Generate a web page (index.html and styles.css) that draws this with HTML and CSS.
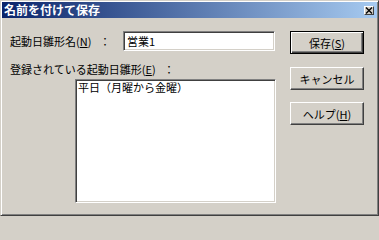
FILE: index.html
```html
<!DOCTYPE html>
<html lang="ja">
<head>
<meta charset="utf-8">
<title>名前を付けて保存</title>
<link rel="stylesheet" href="styles.css">
</head>
<body>
<div class="window">
  <div class="titlebar">
    <span class="title">名前を付けて保存</span>
    <span class="close">
      <svg width="8" height="7" viewBox="0 0 8 7"><path d="M1 0.5 L7 6.5 M7 0.5 L1 6.5" stroke="#000" stroke-width="1.3" fill="none"/></svg>
    </span>
  </div>
  <div class="body">
    <div class="left">
      <div class="row">
        <span class="label">起動日雛形名(<u>N</u>)<span class="colon">：</span></span>
        <div class="field">営業1</div>
      </div>
      <div class="label2">登録されている起動日雛形(<u>E</u>)<span class="colon">：</span></div>
      <div class="list">
        <div class="item">平日（月曜から金曜）</div>
      </div>
    </div>
    <div class="buttons">
      <div class="btn default"><span class="btn-in">保存(<u>S</u>)</span></div>
      <div class="btn cancel"><span class="btn-in">キャンセル</span></div>
      <div class="btn help"><span class="btn-in">ヘルプ(<u>H</u>)</span></div>
    </div>
  </div>
</div>
</body>
</html>
```
FILE: styles.css
```css
html, body {
  margin: 0;
  padding: 0;
  background: #d4d0c8;
}
body {
  font-family: "Noto Sans CJK JP", "Noto Sans", sans-serif;
  font-size: 11px;
  color: #000;
}
.window {
  box-sizing: border-box;
  width: 379px;
  height: 216px;
  background: #d4d0c8;
  border: 1px solid;
  border-color: #d4d0c8 #404040 #404040 #d4d0c8;
  box-shadow: inset 1px 1px #fff, inset -1px -1px #808080;
  padding: 1px;
  display: flex;
  flex-direction: column;
}
.titlebar {
  height: 16px;
  background: linear-gradient(to right, #0a246a, #a6caf0);
  display: flex;
  align-items: center;
  justify-content: space-between;
  padding: 0 3px 0 2px;
}
.title {
  color: #fff;
  font-weight: bold;
  font-size: 12px;
  line-height: 16px;
}
.close {
  box-sizing: border-box;
  width: 10px;
  height: 9px;
  background: #d4d0c8;
  border: 1px solid;
  border-color: #fff #404040 #404040 #fff;
  display: flex;
  align-items: center;
  justify-content: center;
}
.close svg { display: block; }
.body {
  display: flex;
  gap: 14px;
  padding: 13px 13px 0 8px;
}
.left {
  width: 266px;
  display: flex;
  flex-direction: column;
}
.row {
  display: flex;
  align-items: center;
  height: 20px;
}
.label {
  width: 113px;
  line-height: 16px;
  white-space: nowrap;
}
.colon {
  margin-left: 8px;
}
.field {
  box-sizing: border-box;
  width: 152px;
  height: 20px;
  background: #fff;
  border: 1px solid;
  border-color: #808080 #fff #fff #808080;
  box-shadow: inset 1px 1px #404040, inset -1px -1px #d4d0c8;
  padding: 0 3px;
  line-height: 18px;
  white-space: nowrap;
}
.label2 {
  margin-top: 10px;
  margin-bottom: 2px;
  line-height: 16px;
  white-space: nowrap;
}
.list {
  box-sizing: border-box;
  margin-left: 65px;
  width: 201px;
  height: 124px;
  background: #fff;
  border: 1px solid;
  border-color: #808080 #fff #fff #808080;
  box-shadow: inset 1px 1px #404040, inset -1px -1px #d4d0c8;
  padding: 1px 2px;
}
.item {
  line-height: 13px;
  white-space: nowrap;
}
.buttons {
  width: 74px;
  display: flex;
  flex-direction: column;
}
.btn {
  box-sizing: border-box;
  width: 74px;
  height: 23px;
  border: 1px solid;
  border-color: #fff #404040 #404040 #fff;
  box-shadow: inset -1px -1px #808080;
  background: #d4d0c8;
  display: flex;
  align-items: center;
  justify-content: center;
}
.btn.default {
  border: 1px solid #000;
  box-shadow: inset 1px 1px #fff, inset -1px -1px #404040, inset -2px -2px #808080;
}
.btn.cancel { margin-top: 13px; }
.btn.help { margin-top: 12px; }
.btn-in {
  line-height: 14px;
  white-space: nowrap;
}
u { text-decoration: underline; text-underline-offset: 1px; }
```
